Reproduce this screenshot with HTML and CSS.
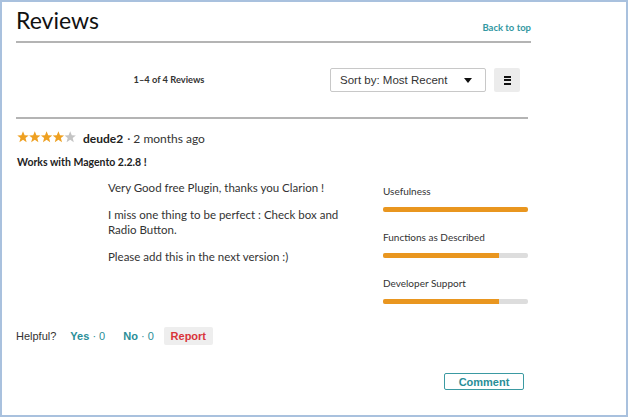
FILE: index.html
```html
<html>
<head>
<meta charset="utf-8">
<title>Reviews</title>
<link rel="stylesheet" href="styles.css">
</head>
<body>
	<div class="frame">
		<div class="head">
			<h1>Reviews</h1>
			<a class="back" href="#">Back to top</a>
		</div>

		<div class="toolbar">
			<div class="count">1–4 of 4 Reviews</div>
			<div class="sort">
				<span>Sort by: Most Recent</span>
				<span class="caret"></span>
			</div>
			<div class="menu-btn">
				<span></span><span></span><span></span>
			</div>
		</div>

		<div class="review">
			<div class="meta">
				<svg class="stars" width="60" height="12" viewBox="0 0 60 12">
					<polygon fill="#eea021" points="6,0.3 7.6,4.2 11.7,4.4 8.5,7 9.6,11.2 6,8.8 2.4,11.2 3.5,7 0.3,4.4 4.4,4.2"/>
					<polygon fill="#eea021" transform="translate(11.8 0)" points="6,0.3 7.6,4.2 11.7,4.4 8.5,7 9.6,11.2 6,8.8 2.4,11.2 3.5,7 0.3,4.4 4.4,4.2"/>
					<polygon fill="#eea021" transform="translate(23.6 0)" points="6,0.3 7.6,4.2 11.7,4.4 8.5,7 9.6,11.2 6,8.8 2.4,11.2 3.5,7 0.3,4.4 4.4,4.2"/>
					<polygon fill="#eea021" transform="translate(35.4 0)" points="6,0.3 7.6,4.2 11.7,4.4 8.5,7 9.6,11.2 6,8.8 2.4,11.2 3.5,7 0.3,4.4 4.4,4.2"/>
					<polygon fill="#c4c4c4" transform="translate(47.2 0)" points="6,0.3 7.6,4.2 11.7,4.4 8.5,7 9.6,11.2 6,8.8 2.4,11.2 3.5,7 0.3,4.4 4.4,4.2"/>
				</svg>
				<b>deude2</b> · 2 months ago
			</div>
			<h2>Works with Magento 2.2.8 !</h2>

			<div class="body">
				<div class="text">
					<p>Very Good free Plugin, thanks you Clarion !</p>
					<p>I miss one thing to be perfect : Check box and Radio Button.</p>
					<p>Please add this in the next version :)</p>
				</div>
				<div class="ratings">
					<div class="rating">
						<div class="label">Usefulness</div>
						<div class="track"><div class="fill" style="width: 100%"></div></div>
					</div>
					<div class="rating">
						<div class="label">Functions as Described</div>
						<div class="track"><div class="fill" style="width: 80%"></div></div>
					</div>
					<div class="rating">
						<div class="label">Developer Support</div>
						<div class="track"><div class="fill" style="width: 80%"></div></div>
					</div>
				</div>
			</div>

			<div class="helpful">
				<span>Helpful?</span>
				<a class="vote" href="#"><b>Yes</b> · 0</a>
				<a class="vote" href="#"><b>No</b> · 0</a>
				<button class="report">Report</button>
			</div>

			<div class="actions">
				<button class="comment">Comment</button>
			</div>
		</div>
	</div>
</body>
</html>
```

FILE: styles.css
```css
* {
	margin: 0;
	padding: 0;
	box-sizing: border-box;
}

body {
	margin: 0;
	font-family: Lato, "Open Sans", sans-serif;
	color: #222;
	background: #fff;
}

.frame {
	width: 628px;
	height: 417px;
	border: 2px solid #a9c1de;
	padding: 0 0 0 14px;
}

.head {
	width: 515px;
	display: flex;
	justify-content: space-between;
	align-items: flex-end;
	padding-top: 4px;
	padding-bottom: 7px;
	border-bottom: 2px solid #b4b4b4;
}

h1 {
	font-size: 23px;
	font-weight: 400;
	line-height: 28px;
	color: #111;
}

.back {
	font-size: 9.5px;
	font-weight: 700;
	color: #3398a2;
	text-decoration: none;
	margin-bottom: 1px;
}

.toolbar {
	width: 512px;
	height: 76px;
	display: flex;
	align-items: center;
	border-bottom: 2px solid #b4b4b4;
}

.count {
	width: 306px;
	text-align: center;
	font-size: 9.3px;
	font-weight: 700;
	color: #333;
	margin-top: -2px;
}

.sort {
	margin-left: 8px;
	width: 156px;
	height: 24px;
	border: 1px solid #c8c8c8;
	border-radius: 2px;
	display: flex;
	align-items: center;
	justify-content: space-between;
	padding: 0 13px 0 9px;
	font-family: "Liberation Sans", Arial, sans-serif;
	font-size: 11.5px;
	color: #333;
}

.caret {
	width: 0;
	height: 0;
	border-left: 4.5px solid transparent;
	border-right: 4.5px solid transparent;
	border-top: 5px solid #111;
}

.menu-btn {
	margin-left: 8px;
	width: 26px;
	height: 24px;
	background: #ececec;
	border-radius: 2px;
	display: flex;
	flex-direction: column;
	align-items: center;
	justify-content: center;
	gap: 1.5px;
}

.menu-btn span {
	width: 7px;
	height: 2px;
	background: #111;
}

.review {
	width: 515px;
	padding-top: 10px;
}

.meta {
	display: flex;
	align-items: center;
	gap: 4px;
	font-size: 12px;
	color: #333;
	height: 18px;
}

.meta b {
	font-weight: 700;
	color: #222;
	margin-left: 2px;
}

.stars {
	margin-left: 1px;
	margin-top: -2px;
}

h2 {
	margin-top: 9px;
	margin-left: 1px;
	font-size: 10.5px;
	font-weight: 700;
	color: #222;
}

.body {
	display: flex;
	margin-top: 12px;
}

.text {
	width: 275px;
	margin-left: 92px;
	padding-right: 25px;
	font-size: 11.5px;
	line-height: 15px;
	color: #333;
}

.text p {
	margin-bottom: 12px;
}

.ratings {
	width: 145px;
}

.rating {
	height: 46px;
	padding-top: 4px;
}

.label {
	font-size: 10px;
	color: #333;
	line-height: 14px;
}

.track {
	margin-top: 9px;
	height: 5px;
	background: #ddd;
	border-radius: 2px;
	overflow: hidden;
}

.fill {
	height: 100%;
	background: #e9961f;
}

.helpful {
	margin-top: 9px;
	display: flex;
	align-items: center;
	font-family: "Liberation Sans", Arial, sans-serif;
	font-size: 11px;
	color: #333;
}

.vote {
	margin-left: 14px;
	color: #2a8e98;
	text-decoration: none;
}

.vote + .vote {
	margin-left: 18px;
}

.report {
	margin-left: 10px;
	background: #eee;
	border: none;
	border-radius: 2px;
	height: 18px;
	width: 49px;
	font-family: "Liberation Sans", Arial, sans-serif;
	font-size: 11px;
	font-weight: 700;
	color: #d9353a;
}

.actions {
	display: flex;
	justify-content: flex-end;
	margin-top: 28px;
	padding-right: 7px;
}

.comment {
	width: 80px;
	height: 17px;
	background: #fff;
	border: 1px solid #3b9aa2;
	border-radius: 2px;
	font-family: "Liberation Sans", Arial, sans-serif;
	font-size: 11px;
	font-weight: 700;
	color: #2a8e98;
}
```
